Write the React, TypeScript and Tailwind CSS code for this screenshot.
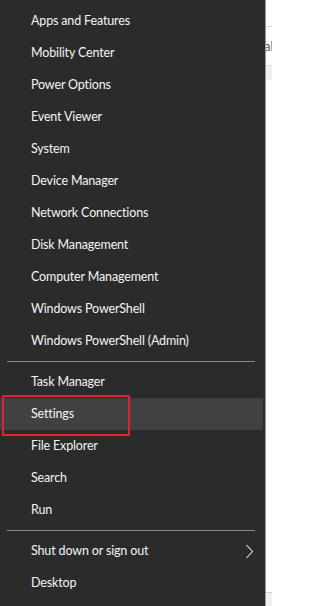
type Entry = { label: string; sub?: boolean; active?: boolean } | "sep";

const entries: Entry[] = [
  { label: "Apps and Features" },
  { label: "Mobility Center" },
  { label: "Power Options" },
  { label: "Event Viewer" },
  { label: "System" },
  { label: "Device Manager" },
  { label: "Network Connections" },
  { label: "Disk Management" },
  { label: "Computer Management" },
  { label: "Windows PowerShell" },
  { label: "Windows PowerShell (Admin)" },
  "sep",
  { label: "Task Manager" },
  { label: "Settings", active: true },
  { label: "File Explorer" },
  { label: "Search" },
  { label: "Run" },
  "sep",
  { label: "Shut down or sign out", sub: true },
  { label: "Desktop" },
];

const Separator = () => <div className="mx-[7px] my-[4px] h-px w-[248px] bg-[#8a8a8a]" />;

const Chevron = () => (
  <svg width="9" height="15" viewBox="0 0 9 15" fill="none" className="text-[#e4e4e4]">
    <polyline points="1.5,1 7.5,7.5 1.5,14" stroke="currentColor" strokeWidth="1.1" />
  </svg>
);

const MenuItem = ({ label, sub, active }: { label: string; sub?: boolean; active?: boolean }) => (
  <div className="relative">
    <div
      className={`flex h-8 w-[263px] items-center pl-[31px] pr-[9px] pt-px text-[12.5px] tracking-[-0.15px] text-[#f4f4f4] ${
        active ? "bg-[#414141]" : ""
      }`}
    >
      <span className="flex-1">{label}</span>
      {sub && <Chevron />}
    </div>
    {active && (
      <div className="pointer-events-none absolute left-[2px] top-[-3px] h-[41px] w-[128px] rounded-[1px] border-2 border-[#d9262f]" />
    )}
  </div>
);

export default function App() {
  return (
    <div
      className="flex h-[606px] w-[272px] overflow-hidden bg-white"
      style={{ fontFamily: 'Lato, "Noto Sans", sans-serif' }}
    >
      <div className="flex h-full w-[266px] shrink-0 flex-col border-r border-[#9a9a9a] bg-[#2b2b2b] pt-[5px]">
        {entries.map((e, i) =>
          e === "sep" ? <Separator key={i} /> : <MenuItem key={i} {...e} />
        )}
      </div>

      {/* window behind the menu */}
      <div className="flex h-full w-[6px] shrink-0 flex-col overflow-hidden">
        <div className="h-[27px] border-b border-[#d6d6d6] bg-white" />
        <div className="flex h-[38px] items-center overflow-hidden bg-white">
          <span className="-ml-[2px] text-[13px] leading-none text-[#555]">al</span>
        </div>
        <div className="h-[15px] border-t border-[#dedede] bg-[#f0f0f0]" />
        <div className="flex-1 bg-white" />
        <div className="h-[14px] border-t border-[#d0d0d0] bg-[#f0f0f0]" />
      </div>
    </div>
  );
}
